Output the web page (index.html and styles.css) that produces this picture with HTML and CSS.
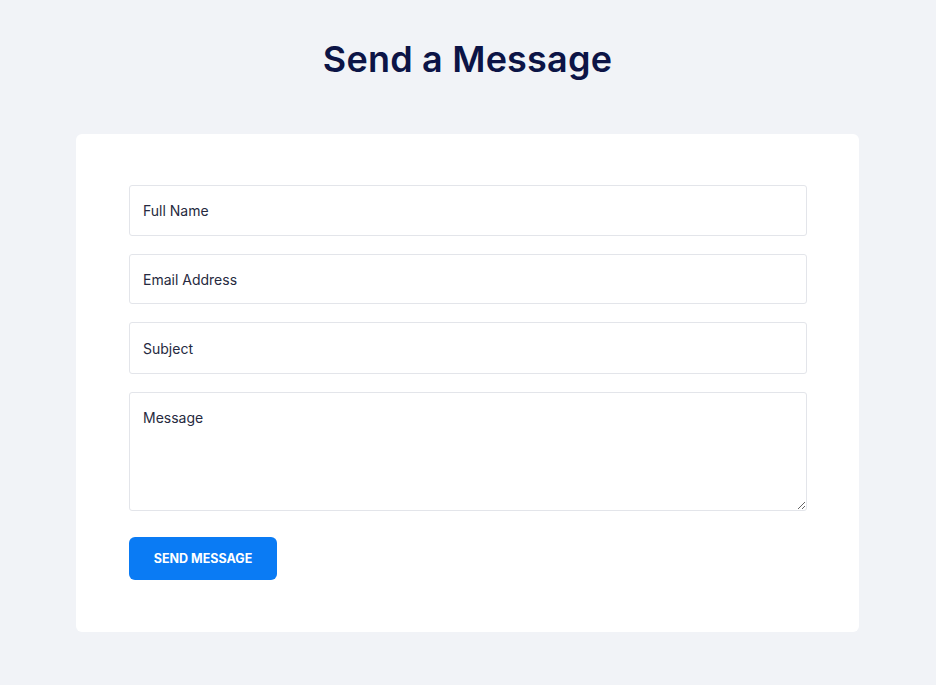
FILE: index.html
```html
<!DOCTYPE html>
<html lang="en">
<head>
    <meta charset="UTF-8">
    <meta name="viewport" content="width=device-width, initial-scale=1.0">
    <title>Send a Message</title>
    <link rel="stylesheet" href="styles.css">
</head>
<body>
    <main class="contact">
        <h1 class="contact-title">Send a Message</h1>

        <form class="contact-card" onsubmit="return false;">
            <input class="field" type="text" placeholder="Full Name">
            <input class="field field-email" type="email" placeholder="Email Address">
            <input class="field field-subject" type="text" placeholder="Subject">
            <textarea class="field field-message" placeholder="Message"></textarea>
            <button class="send-button" type="submit">Send Message</button>
        </form>
    </main>
</body>
</html>
```

FILE: styles.css
```css
/* Generel styling */
html, body {
    margin: 0;
    padding: 0;
    background: #f1f3f7;
    font-family: 'Inter', 'Noto Sans', sans-serif;
    color: #1f2440;
}

* {
    box-sizing: border-box;
}

.contact {
    width: 783px;
    margin: 0 0 0 76px;
    padding-top: 36px;
}

.contact-title {
    margin: 0 0 52px;
    text-align: center;
    font-size: 36px;
    font-weight: 600;
    line-height: 46px;
    letter-spacing: 0.2px;
    color: #0c1446;
}

.contact-card {
    display: flex;
    flex-direction: column;
    align-items: flex-start;
    gap: 18px;
    background: #fff;
    border-radius: 6px;
    padding: 51px 52px 52px 53px;
}

.field {
    width: 100%;
    height: 51px;
    padding: 0 13px;
    border: 1px solid #e3e5ea;
    border-radius: 3px;
    background: #fff;
    font-family: 'Inter', 'Noto Sans', sans-serif;
    font-size: 14px;
    color: #1f2440;
    outline: none;
}

.field::placeholder {
    color: #262a40;
    opacity: 1;
}

.field-email {
    height: 50px;
}

.field-subject {
    height: 52px;
}

.field-message {
    height: 119px;
    padding: 16px 13px;
    resize: vertical;
    line-height: 18px;
}

.send-button {
    margin-top: 8px;
    width: 148px;
    height: 43px;
    border: none;
    border-radius: 6px;
    background: #0a7bf4;
    color: #fff;
    font-family: 'Inter', 'Noto Sans', sans-serif;
    font-size: 12.5px;
    font-weight: 700;
    text-transform: uppercase;
    cursor: pointer;
}

.send-button:hover {
    background: #0a6fe0;
}
```
